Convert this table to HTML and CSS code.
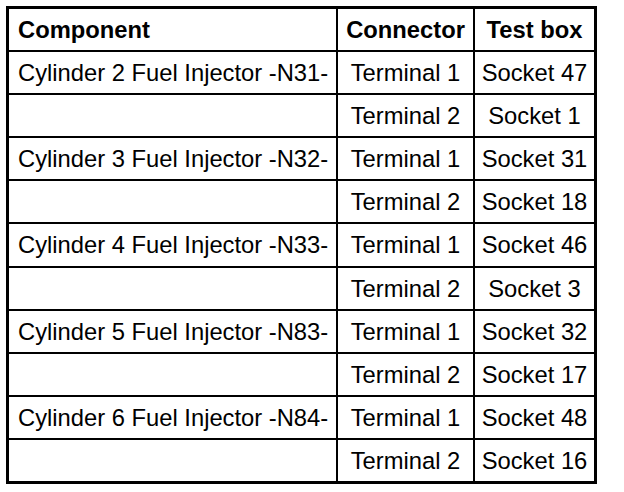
FILE: index.html
```html
<!DOCTYPE html>
<html>
<head>
<meta charset="utf-8">
<link rel="stylesheet" href="styles.css">
</head>
<body>
<div class="table">
  <div class="cell head left">Component</div>
  <div class="cell head">Connector</div>
  <div class="cell head">Test box</div>

  <div class="cell left">Cylinder 2 Fuel Injector -N31-</div>
  <div class="cell">Terminal 1</div>
  <div class="cell">Socket 47</div>
  <div class="cell left"></div>
  <div class="cell">Terminal 2</div>
  <div class="cell">Socket 1</div>

  <div class="cell left">Cylinder 3 Fuel Injector -N32-</div>
  <div class="cell">Terminal 1</div>
  <div class="cell">Socket 31</div>
  <div class="cell left"></div>
  <div class="cell">Terminal 2</div>
  <div class="cell">Socket 18</div>

  <div class="cell left">Cylinder 4 Fuel Injector -N33-</div>
  <div class="cell">Terminal 1</div>
  <div class="cell">Socket 46</div>
  <div class="cell left"></div>
  <div class="cell">Terminal 2</div>
  <div class="cell">Socket 3</div>

  <div class="cell left">Cylinder 5 Fuel Injector -N83-</div>
  <div class="cell">Terminal 1</div>
  <div class="cell">Socket 32</div>
  <div class="cell left"></div>
  <div class="cell">Terminal 2</div>
  <div class="cell">Socket 17</div>

  <div class="cell left">Cylinder 6 Fuel Injector -N84-</div>
  <div class="cell">Terminal 1</div>
  <div class="cell">Socket 48</div>
  <div class="cell left"></div>
  <div class="cell">Terminal 2</div>
  <div class="cell">Socket 16</div>
</div>
</body>
</html>
```
FILE: styles.css
```css
html, body {
  margin: 0;
  padding: 0;
  background: #fff;
}
body {
  padding: 6px;
  font-family: "Liberation Sans", Arial, sans-serif;
  font-size: 23.75px;
  color: #000;
}
.table {
  display: grid;
  width: 591px;
  height: 478px;
  box-sizing: border-box;
  grid-template-columns: 327px 135px 119px;
  grid-template-rows: repeat(11, 1fr);
  gap: 2px;
  background: #000;
  border: 3px solid #000;
}
.cell {
  background: #fff;
  display: flex;
  align-items: center;
  justify-content: center;
  white-space: nowrap;
  padding-top: 1px;
}
.cell.left {
  justify-content: flex-start;
  padding-left: 9px;
}
.head {
  font-weight: bold;
}
```
